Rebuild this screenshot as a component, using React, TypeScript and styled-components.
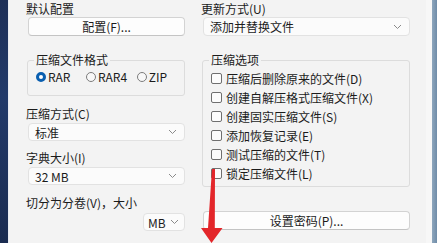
import React from "react";
import styled, { createGlobalStyle } from "styled-components";

const GlobalStyle = createGlobalStyle`
  html, body {
    margin: 0;
    padding: 0;
    background: #f2f2f2;
  }
  body {
    font-family: "Noto Sans CJK SC", "Liberation Sans", sans-serif;
    font-size: 12px;
    color: #1b1b1b;
  }
`;

const Window = styled.div`
  position: relative;
  width: 437px;
  height: 243px;
  display: flex;
  overflow: hidden;
  background: #f3f3f3;
`;

const Desktop = styled.div`
  width: 8px;
  background: linear-gradient(180deg, #1d2f57 0%, #223a6a 40%, #1a2b50 100%);
  border-right: 1px solid #e9ecf2;
`;

const RightEdge = styled.div`
  width: 5px;
  background: linear-gradient(90deg, #8fa7bd 0%, #6f8ca8 100%);
`;

const Body = styled.div`
  flex: 1;
  display: grid;
  grid-template-columns: 158px 208px;
  column-gap: 17px;
  padding: 2px 0 0 18px;
  background: #f3f3f3;
  border-right: 6px solid #f7f7f7;
`;

const Column = styled.div`
  display: flex;
  flex-direction: column;
`;

const Label = styled.div<{ $mt?: number }>`
  height: 14px;
  line-height: 14px;
  margin-top: ${(p) => p.$mt ?? 0}px;
  margin-left: -1px;
  white-space: nowrap;
`;

const Button = styled.div<{ $mt?: number }>`
  height: 19px;
  margin-top: ${(p) => p.$mt ?? 0}px;
  margin-left: 1px;
  display: flex;
  align-items: center;
  justify-content: center;
  background: #fdfdfd;
  border: 1px solid #d3d3d3;
  border-bottom-color: #c4c4c4;
  border-radius: 4px;
  box-sizing: border-box;
`;

const Select = styled.div<{ $mt?: number; $w?: number; $h?: number }>`
  height: ${(p) => p.$h ?? 18}px;
  margin-top: ${(p) => p.$mt ?? 0}px;
  margin-left: 1px;
  width: ${(p) => (p.$w ? `${p.$w}px` : "auto")};
  align-self: ${(p) => (p.$w ? "flex-end" : "stretch")};
  box-sizing: border-box;
  display: flex;
  align-items: center;
  justify-content: space-between;
  padding: ${(p) => (p.$w ? "0 5px 0 4px" : "0 7px 0 6px")};
  background: #fbfbfb;
  border: 1px solid #e2e2e2;
  border-radius: 4px;
  white-space: nowrap;
`;

const Chevron = () => (
  <svg width="9" height="6" viewBox="0 0 9 6" style={{ flexShrink: 0 }}>
    <path d="M1 1 L4.5 4.5 L8 1" fill="none" stroke="#8a8a8a" strokeWidth="1" />
  </svg>
);

const Group = styled.fieldset<{ $mt?: number; $h: number }>`
  margin: ${(p) => p.$mt ?? 0}px 0 0 0;
  height: ${(p) => p.$h}px;
  box-sizing: border-box;
  padding: 0 8px;
  border: 1px solid #dcdcdc;
  border-radius: 3px;
  min-width: 0;

  legend {
    padding: 0 2px;
    margin-left: -2px;
    line-height: 14px;
    font-size: 12px;
  }
`;

const RadioRow = styled.div`
  display: flex;
  align-items: center;
  margin-top: 3px;
`;

const RadioItem = styled.label<{ $w: number }>`
  display: flex;
  align-items: center;
  gap: 2px;
  width: ${(p) => p.$w}px;
  line-height: 14px;
`;

const RadioDot = styled.span<{ $on?: boolean }>`
  width: 10px;
  height: 10px;
  border-radius: 50%;
  box-sizing: border-box;
  background: ${(p) => (p.$on ? "#fff" : "#f8f8f8")};
  border: ${(p) => (p.$on ? "3px solid #0a5fb0" : "1px solid #7c7c7c")};
`;

const CheckList = styled.div`
  display: flex;
  flex-direction: column;
  margin-top: 2px;
`;

const CheckRow = styled.label`
  display: flex;
  align-items: center;
  gap: 4px;
  height: 19px;
  line-height: 14px;
`;

const CheckBox = styled.span`
  width: 11px;
  height: 11px;
  box-sizing: border-box;
  border: 1px solid #6f6f6f;
  border-radius: 2px;
  background: #fcfcfc;
`;

const Arrow = styled.svg`
  position: absolute;
  left: 198px;
  top: 166px;
`;

const options = [
  "压缩后删除原来的文件(D)",
  "创建自解压格式压缩文件(X)",
  "创建固实压缩文件(S)",
  "添加恢复记录(E)",
  "测试压缩的文件(T)",
  "锁定压缩文件(L)",
];

export default function App() {
  return (
    <>
      <GlobalStyle />
      <Window>
        <Desktop />
        <Body>
          <Column>
            <Label>默认配置</Label>
            <Button $mt={1}>配置(F)...</Button>
            <Group $mt={17} $h={43}>
              <legend>压缩文件格式</legend>
              <RadioRow>
                <RadioItem $w={51}>
                  <RadioDot $on />
                  RAR
                </RadioItem>
                <RadioItem $w={52}>
                  <RadioDot />
                  RAR4
                </RadioItem>
                <RadioItem $w={40}>
                  <RadioDot />
                  ZIP
                </RadioItem>
              </RadioRow>
            </Group>
            <Label $mt={11}>压缩方式(C)</Label>
            <Select $mt={2}>
              <span>标准</span>
              <Chevron />
            </Select>
            <Label $mt={10}>字典大小(I)</Label>
            <Select $mt={2}>
              <span>32 MB</span>
              <Chevron />
            </Select>
            <Label $mt={11}>切分为分卷(V)，大小</Label>
            <Select $mt={3} $w={42}>
              <span>MB</span>
              <Chevron />
            </Select>
          </Column>
          <Column>
            <Label>更新方式(U)</Label>
            <Select $mt={1} $h={19}>
              <span>添加并替换文件</span>
              <Chevron />
            </Select>
            <Group $mt={17} $h={134}>
              <legend>压缩选项</legend>
              <CheckList>
                {options.map((o) => (
                  <CheckRow key={o}>
                    <CheckBox />
                    {o}
                  </CheckRow>
                ))}
              </CheckList>
            </Group>
            <Button $mt={24}>设置密码(P)...</Button>
          </Column>
        </Body>
        <RightEdge />
        <Arrow width="30" height="77" viewBox="0 0 30 77">
          <path
            d="M14 3 L17 3 L16.8 62 L24.5 62 L13.5 77 L3 62 L10 62 Z"
            fill="#e3262a"
          />
        </Arrow>
      </Window>
    </>
  );
}
